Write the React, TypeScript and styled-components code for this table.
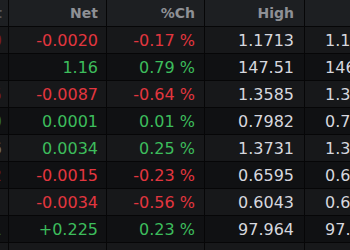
import React, { FC } from 'react'
import styled, { createGlobalStyle } from 'styled-components'

const GlobalStyle = createGlobalStyle`
  html, body {
    margin: 0;
    padding: 0;
    background: #111214;
  }
  body {
    font-family: "DejaVu Sans", Verdana, sans-serif;
  }
`

const Board = styled.div`
  width: 350px;
  height: 250px;
  overflow: hidden;
  background: #111214;
`

const Row = styled.div<{ $head?: boolean; $odd?: boolean }>`
  display: grid;
  grid-template-columns: 9px 98px 98px 100px 87px;
  height: 26px;
  border-bottom: 1px solid #060607;
  background: ${p => (p.$head ? '#1d1f22' : p.$odd ? '#17181a' : '#101113')};
`

const Cell = styled.div<{ $head?: boolean; $tone?: string; $pad?: number }>`
  display: flex;
  align-items: center;
  justify-content: flex-end;
  white-space: nowrap;
  padding-right: ${p => p.$pad ?? 8}px;
  border-right: 1px solid #060607;
  font-size: ${p => (p.$head ? '14px' : '16px')};
  font-weight: ${p => (p.$head ? 700 : 400)};
  color: ${p => p.$tone ?? (p.$head ? '#8e9095' : '#d6d7de')};
  overflow: visible;
  min-width: 0;
`

const tones: Record<string, string> = {
  up: '#3dbd5c',
  down: '#e2363f',
  flat: '#d6d7de',
  dimUp: '#2d6a36',
  dimDown: '#7a1c22',
  dimFlat: '#6a6b70',
}

interface Quote {
  last: string
  lastTone: string
  net: string
  pct: string
  high: string
  low: string
}

const quotes: Quote[] = [
  { last: '1.1690', lastTone: 'dimDown', net: '-0.0020', pct: '-0.17 %', high: '1.1713', low: '1.1671' },
  { last: '', lastTone: 'dimUp', net: '1.16', pct: '0.79 %', high: '147.51', low: '146.20' },
  { last: '1.3505', lastTone: 'dimDown', net: '-0.0087', pct: '-0.64 %', high: '1.3585', low: '1.3489' },
  { last: '0.7960', lastTone: 'dimUp', net: '0.0001', pct: '0.01 %', high: '0.7982', low: '0.7951' },
  { last: '1.3706', lastTone: 'dimFlat', net: '0.0034', pct: '0.25 %', high: '1.3731', low: '1.3680' },
  { last: '0.6582', lastTone: 'dimDown', net: '-0.0015', pct: '-0.23 %', high: '0.6595', low: '0.6571' },
  { last: '', lastTone: 'dimDown', net: '-0.0034', pct: '-0.56 %', high: '0.6043', low: '0.6012' },
  { last: '97.81', lastTone: 'dimUp', net: '+0.225', pct: '0.23 %', high: '97.964', low: '97.603' },
]

const QuoteRow: FC<{ q: Quote; odd: boolean }> = ({ q, odd }) => {
  const tone = q.net.startsWith('-') ? tones.down : tones.up
  return (
    <Row $odd={odd}>
      <Cell $pad={6} $tone={tones[q.lastTone]}>{q.last}</Cell>
      <Cell $tone={tone}>{q.net}</Cell>
      <Cell $pad={9} $tone={tone}>{q.pct}</Cell>
      <Cell $pad={10}>{q.high}</Cell>
      <Cell $pad={10}>{q.low}</Cell>
    </Row>
  )
}

const App: FC = () => (
  <Board>
    <GlobalStyle />
    <Row $head>
      <Cell $head $pad={6} $tone="#55575c">Last</Cell>
      <Cell $head>Net</Cell>
      <Cell $head $pad={9}>%Ch</Cell>
      <Cell $head $pad={10}>High</Cell>
      <Cell $head $pad={10} $tone="#3f6fb8">Low</Cell>
    </Row>
    {quotes.map((q, i) => (
      <QuoteRow key={i} q={q} odd={i % 2 === 0} />
    ))}
    <Row $odd>
      <Cell />
      <Cell />
      <Cell />
      <Cell />
      <Cell />
    </Row>
  </Board>
)

export default App
